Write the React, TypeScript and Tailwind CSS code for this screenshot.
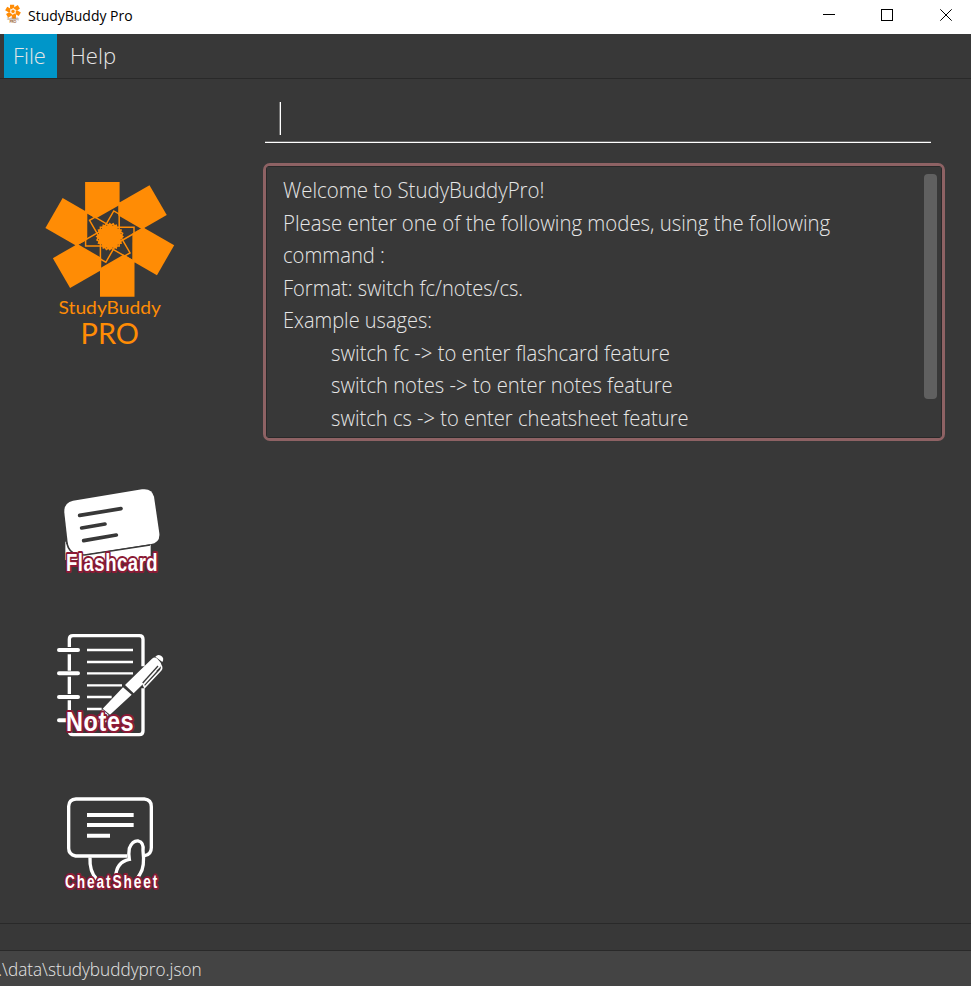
import React from "react";

const ORANGE = "#ff8c05";
const TURNS = [0, 60, 120, 180, 240, 300];

const GEAR = Array.from({ length: 24 }, (_, i) => {
  const r = i % 2 ? 11.2 : 14.2;
  const a = (i * Math.PI) / 12;
  return `${(r * Math.cos(a)).toFixed(2)},${(r * Math.sin(a)).toFixed(2)}`;
}).join(" ");

function Pinwheel() {
  return (
    <g fill={ORANGE}>
      {TURNS.map((t) => (
        <g key={t} transform={`rotate(${t})`}>
          <polygon
            points={
              t === 0
                ? "-24.7,-54.6 9.8,-54.6 9.8,-31.6 -14,-18 -24.7,-24.4"
                : "-24.7,-60.1 9.8,-60.1 9.8,-31.6 -14,-18 -24.7,-24.4"
            }
          />
          <path d="M-24.2,-26 V9.4 H9.4 V-33" fill="none" stroke={ORANGE} strokeWidth="1.5" />
        </g>
      ))}
      <polygon points={GEAR} />
    </g>
  );
}

function Logo() {
  return (
    <svg width="160" height="190" viewBox="30 170 160 190">
      <g transform="translate(109.8 236.6)">
        <Pinwheel />
      </g>
      <g fill={ORANGE} fontFamily="Lato, 'Open Sans', sans-serif" fontWeight="400">
        <text x="58.5" y="313.8" fontSize="18" textLength="102.5" lengthAdjust="spacingAndGlyphs">StudyBuddy</text>
        <text x="80.5" y="343.7" fontSize="29" textLength="58.5" lengthAdjust="spacingAndGlyphs">PRO</text>
      </g>
    </svg>
  );
}

function SmallLogo() {
  return (
    <svg width="16" height="20" viewBox="0 0 16 20">
      <g transform="translate(8 7.4) scale(.122)">
        <Pinwheel />
        <circle r="20" fill="none" stroke="#fff" strokeWidth="5" opacity=".6" />
      </g>
      <text x="2" y="15.6" fontSize="2.8" textLength="12" fill="#9b806c" fontFamily="Lato, sans-serif" fontWeight="400">StudyBuddy</text>
      <text x="4.6" y="19" fontSize="3.6" textLength="6.8" fill="#9b5c2c" fontFamily="Lato, sans-serif" fontWeight="700">PRO</text>
    </svg>
  );
}

type LabelProps = { x: number; y: number; size: number; width: number; squeeze: number; outline: number; children: string };

/** Condensed poster lettering with a dark red outline. */
function Label({ x, y, size, width, squeeze, outline, children }: LabelProps) {
  return (
    <g transform={`translate(${x} ${y}) scale(${squeeze} 1)`}>
      <text
        fontSize={size}
        textLength={width / squeeze}
        lengthAdjust="spacing"
        fontWeight="700"
        fill="#fff"
        stroke="#8b1a35"
        strokeWidth={outline}
        strokeLinejoin="round"
        paintOrder="stroke"
        fontFamily="'Liberation Sans', sans-serif"
      >
        {children}
      </text>
    </g>
  );
}

function FlashcardIcon() {
  return (
    <svg width="125" height="105" viewBox="0 0 375 315">
      <path d="M46,184 V240 H302 V195 L110,224 L66,218Z" fill="#fff" />
      <path
        d="M69,62 L276,28 Q306,24 312,50 L328,160 Q331,188 301,193 L96,225 Q60,228 54,196 L43,98 Q41,68 69,62Z"
        fill="#fff"
      />
      <path d="M50,188 Q57,219 82,224 L104,225 L300,195" fill="none" stroke="#383838" strokeWidth="5" />
      <path d="M89,106 L213,86 M95,144 L165,132 M101,182 L199,165" stroke="#383838" strokeWidth="11" strokeLinecap="round" />
      <Label x={48} y={274} size={73} width={275} squeeze={0.76} outline={12}>Flashcard</Label>
    </svg>
  );
}

function NotesIcon() {
  return (
    <svg width="125" height="120" viewBox="0 0 375 360">
      <g fill="none" stroke="#fff">
        <path
          d="M58,66 V43 Q58,32 69,32 H268 Q279,32 279,43 V124 M279,190 V318 Q279,329 268,329 H69 Q58,329 58,318 M58,88 V137 M58,155 V207 M58,226 V277"
          strokeWidth="10"
        />
        <path d="M27,75 H84 M27,145 H84 M27,216 H84 M27,286 H50" strokeWidth="12" strokeLinecap="round" />
        <path d="M111,75 H249 M111,111 H249 M111,145 H249 M111,181 H216 M111,216 H185 M111,252 H155 M111,288 H225" strokeWidth="7" />
      </g>
      <path d="M158,251 L219,187 L245,209 L180,269Z M225,180 L306,101 Q314,94 322,101 L331,112 Q337,119 330,127 L251,205Z" fill="#fff" />
      <path d="M316,95 Q323,87 333,92 Q344,99 337,111Z" fill="#fff" />
      <path d="M327,116 Q340,125 332,136 L284,187 L280,179 L318,137" fill="none" stroke="#fff" strokeWidth="5" />
      <path d="M324,123 L278,174" stroke="#383838" strokeWidth="4" />
      <path d="M156,256 L174,272" stroke="#fff" strokeWidth="6" />
      <Label x={48} y={317} size={84} width={203} squeeze={0.84} outline={12}>Notes</Label>
    </svg>
  );
}

function CheatSheetIcon() {
  return (
    <svg width="125" height="115" viewBox="0 0 375 345">
      <g fill="none" stroke="#fff" strokeWidth="10">
        <path d="M232,213 H77 Q56,209 56,190 V64 Q57,43 78,42 H283 Q304,44 304,65 V188 Q304,208 284,212" />
        <path d="M111,90 H251 M111,120 H251 M111,152 H180" strokeWidth="12" />
        <path d="M120,217 Q118,260 140,282" />
        <path d="M197,275 Q199,231 238,223 Q235,208 238,190 Q248,166 265,168 Q282,172 279,197 Q285,246 270,267 L258,286" />
      </g>
      <Label x={45} y={310} size={57} width={277} squeeze={0.72} outline={12}>CheatSheet</Label>
    </svg>
  );
}

const LINES: { text: string; width: number; indent?: boolean }[] = [
  { text: "Welcome to StudyBuddyPro!", width: 261 },
  { text: "Please enter one of the following modes, using the following", width: 547 },
  { text: "command :", width: 102 },
  { text: "Format: switch fc/notes/cs.", width: 240 },
  { text: "Example usages:", width: 149 },
  { text: "switch fc -> to enter flashcard feature", width: 339, indent: true },
  { text: "switch notes -> to enter notes feature", width: 342, indent: true },
  { text: "switch cs -> to enter cheatsheet feature", width: 358, indent: true },
];

/** Condenses a line of text to the given width. */
function FitText({ text, width }: { text: string; width: number }) {
  const ref = React.useRef<HTMLSpanElement>(null);
  const [scale, setScale] = React.useState(1);
  React.useLayoutEffect(() => {
    if (ref.current) {
      setScale(width / ref.current.offsetWidth);
    }
  }, [text, width]);
  return (
    <span ref={ref} className="inline-block origin-left whitespace-pre" style={{ transform: `scaleX(${scale})` }}>
      {text}
    </span>
  );
}

export default function App() {
  return (
    <div className="flex h-[986px] w-[971px] flex-col overflow-hidden bg-[#383838] font-['Open_Sans','Noto_Sans',sans-serif] font-light text-[#e6e6e6]">
      <header className="flex h-[34px] shrink-0 items-start bg-white text-black">
        <div className="ml-[5px] mt-1"><SmallLogo /></div>
        <span className="ml-[7px] mt-[5px] text-[14.5px] leading-[22px] font-normal"><FitText text="StudyBuddy Pro" width={105} /></span>
        <svg className="ml-auto" width="171" height="34" viewBox="800 0 171 34" fill="none" stroke="#000">
          <path d="M823,14.5 H835 M881.5,9.5 H892.5 V20.5 H881.5Z" shapeRendering="crispEdges" />
          <path d="M940.3,9.3 L951.7,20.7 M951.7,9.3 L940.3,20.7" />
        </svg>
      </header>
      <nav className="flex h-[45px] shrink-0 border-b border-[#292929] pl-1 text-[22.5px] leading-[43px]">
        <div className="w-[53px] bg-[#0096c9] pl-[9px]"><FitText text="File" width={33} /></div>
        <div className="pl-[12.5px]"><FitText text="Help" width={46} /></div>
      </nav>
      <main className="flex min-h-0 flex-1">
        <aside className="flex w-[263px] flex-col">
          <div className="ml-[30px] mt-[91px]"><Logo /></div>
          <div className="ml-[50px] mt-[120px] flex flex-col [&_svg]:block">
            <FlashcardIcon />
            <div className="mt-10"><NotesIcon /></div>
            <div className="mt-10"><CheatSheetIcon /></div>
          </div>
        </aside>
        <section className="flex flex-col">
          <div className="ml-[2px] flex h-16 w-[666px] border-b border-white pl-[14px] pt-[23px] shadow-[inset_0_-1px_0_#686868]">
            <div className="h-[33px] w-[2px] border-l border-[#777777] bg-white" />
          </div>
          <div className="mt-5 flex h-[278px] w-[682px] overflow-hidden rounded-[7px] border-[3px] border-[#8e6264]">
            <div className="flex flex-1 justify-between border border-[#292929] pl-4 pt-[6px]">
              <div className="text-[22px] leading-[32.5px]">
                {LINES.map((l) => (
                  <div key={l.text} className={l.indent ? "pl-12" : ""}>
                    <FitText text={l.text} width={l.width} />
                  </div>
                ))}
              </div>
              <div className="mr-1 mt-px h-[225px] w-[13px] rounded-[4px] bg-[#606060]" />
            </div>
          </div>
        </section>
      </main>
      <div className="h-[27px] shrink-0 border-t border-[#292929]" />
      <footer className="h-[36px] shrink-0 border-t border-[#292929] bg-[#444444] text-[18px] leading-[37px]">
        <div className="-ml-[2px]"><FitText text=".\data\studybuddypro.json" width={204} /></div>
      </footer>
    </div>
  );
}
